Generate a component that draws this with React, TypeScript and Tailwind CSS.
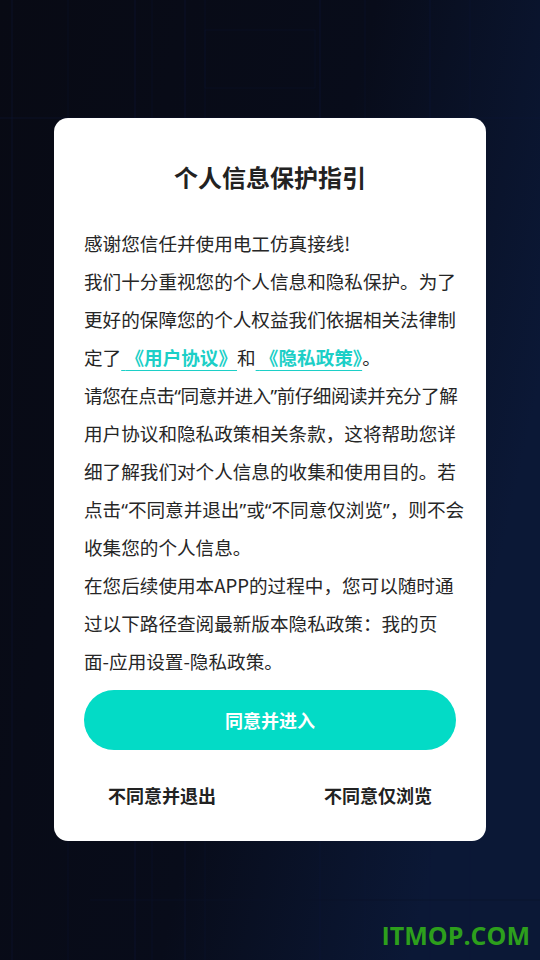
import React from 'react';

const Q = ({ children }: { children: React.ReactNode }) => (
  <span style={{ fontFamily: '"Noto Sans", sans-serif' }}>{children}</span>
);

const lines1 = [
  '感谢您信任并使用电工仿真接线!',
  '我们十分重视您的个人信息和隐私保护。为了',
  '更好的保障您的个人权益我们依据相关法律制',
];

const lines2: React.ReactNode[] = [
  <span className="tracking-[-0.55px]">请您在点击<Q>“</Q>同意并进入<Q>”</Q>前仔细阅读并充分了解</span>,
  '用户协议和隐私政策相关条款，这将帮助您详',
  '细了解我们对个人信息的收集和使用目的。若',
  <>点击<Q>“</Q>不同意并退出<Q>”</Q>或<Q>“</Q>不同意仅浏览<Q>”</Q>，则不会</>,
  '收集您的个人信息。',
  '在您后续使用本APP的过程中，您可以随时通',
  '过以下路径查阅最新版本隐私政策：我的页',
  '面-应用设置-隐私政策。',
];

function GridBg() {
  // faint circuit-like lines behind the dialog
  const xs = [12, 68, 135, 152, 185, 205, 320, 365, 430, 470];
  return (
    <svg className="absolute inset-0 h-full w-full" width="540" height="960">
      <defs>
        <linearGradient id="bg" x1="0" y1="0" x2="1" y2="0.4">
          <stop offset="0" stopColor="#080a14" />
          <stop offset="0.6" stopColor="#080c1a" />
          <stop offset="1" stopColor="#0b1836" />
        </linearGradient>
      </defs>
      <rect width="540" height="960" fill="url(#bg)" />
      {xs.map((x, i) => (
        <line key={i} x1={x} y1="0" x2={x} y2="960" stroke="#0c1638" strokeWidth="1" opacity={i % 2 ? 0.35 : 0.55} />
      ))}
      <line x1="0" y1="118" x2="540" y2="118" stroke="#0c1638" strokeWidth="1" opacity="0.5" />
      <rect x="205" y="30" width="110" height="58" fill="none" stroke="#0b1228" strokeWidth="1" opacity="0.6" />
      <line x1="90" y1="900" x2="540" y2="900" stroke="#0b1228" strokeWidth="1" opacity="0.6" />
    </svg>
  );
}

export default function App() {
  return (
    <div
      className="relative h-[960px] w-[540px] overflow-hidden bg-[#080a14]"
      style={{ fontFamily: '"Noto Sans CJK SC", "Noto Sans", sans-serif' }}
    >
      <GridBg />
      <div className="relative pt-[118px]">
        <div className="mx-[54px] rounded-[14px] bg-white px-[30px] pb-[32px]">
          <h1 className="pt-[42px] text-center text-[24px] font-bold leading-[34px] text-[#222]">
            个人信息保护指引
          </h1>

          <div className="mt-[30px] whitespace-nowrap text-[18.6px] leading-[38px] text-[#262626]">
            {lines1.map((l) => (
              <div key={l} className="h-[38px]">{l}</div>
            ))}
            <div className="h-[38px]">
              定了
              <span className="font-bold text-[#1ccfc7] underline decoration-[#1ccfc7] underline-offset-[5px]">
                {' '}《用户协议》
              </span>
              和
              <span className="font-bold text-[#1ccfc7] underline decoration-[#1ccfc7] underline-offset-[5px]">
                {' '}《隐私政策》
              </span>
              。
            </div>
            {lines2.map((l, i) => (
              <div key={i} className="h-[38px]">{l}</div>
            ))}
          </div>

          <button className="mt-[10px] flex h-[60px] w-full items-center justify-center rounded-full bg-[#03dbc6] text-[18px] font-bold text-white">
            同意并进入
          </button>

          <div className="mt-[31px] flex justify-between px-6 text-[18px] font-bold leading-[28px] text-[#222]">
            <span>不同意并退出</span>
            <span>不同意仅浏览</span>
          </div>
        </div>
      </div>

      <div
        className="absolute bottom-[10px] right-[10px] text-[25px] font-bold leading-[30px] text-[#2d9f1c]"
        style={{ fontFamily: '"Open Sans", "Noto Sans", sans-serif' }}
      >
        ITMOP.COM
      </div>
    </div>
  );
}
